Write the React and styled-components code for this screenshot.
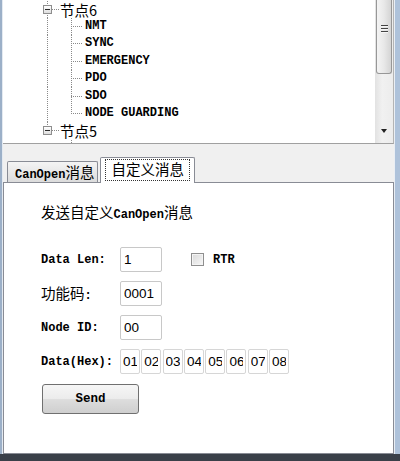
import React from 'react'
import styled, { createGlobalStyle } from 'styled-components'

const GlobalStyle = createGlobalStyle`
  html, body {
    margin: 0;
    padding: 0;
    background: #f0f0f0;
  }
  body {
    font-family: "Liberation Mono", "Noto Sans CJK SC", monospace;
    font-size: 12px;
    color: #000;
  }
`

const dotV = 'repeating-linear-gradient(to bottom, #8a8a8a 0 1px, transparent 1px 2px)'
const dotH = 'repeating-linear-gradient(to right, #8a8a8a 0 1px, transparent 1px 2px)'

// one dotted connector of the tree, as a background layer
const railLayer = (r) => {
  if (r.h) return `${dotH} ${r.x}px 50% / ${r.h}px 1px no-repeat`
  if (r.top) return `${dotV} ${r.x}px 0 / 1px 50% no-repeat`
  return `${dotV} ${r.x}px 0 / 1px 100% no-repeat`
}

const Window = styled.div`
  width: 400px;
  height: 461px;
  display: grid;
  grid-template-columns: 3px 1fr 6px;
  grid-template-rows: 1fr 7px;
  overflow: hidden;
`

const LeftFrame = styled.div`
  background: linear-gradient(to right, #9cb0c8 0 2px, #e4eaf1 2px);
`

const RightFrame = styled.div`
  background: linear-gradient(to right, #e9eef4 0 1px, #aec2da 1px);
`

const BottomBar = styled.div`
  grid-column: 1 / -1;
  background: #3a4049;
`

const Main = styled.div`
  display: flex;
  flex-direction: column;
  min-width: 0;
  background: #f0f0f0;
`

const Tree = styled.div`
  height: 143px;
  display: flex;
  background: #fff;
  border-bottom: 1px solid #a0a0a0;
  border-right: 1px solid #b4b4b4;
`

const TreeItems = styled.ul`
  flex: 1;
  margin: 0;
  padding: 0.5px 0 0;
  list-style: none;
  overflow: hidden;
`

const TreeRow = styled.li`
  height: 17.4px;
  line-height: 17px;
  display: flex;
  align-items: center;
  padding-left: ${(p) => p.$indent}px;
  font-weight: 700;
  white-space: nowrap;
  background: ${(p) => p.$rails.map(railLayer).join(', ')};
`

const Expander = styled.span`
  position: relative;
  width: 9px;
  height: 9px;
  box-sizing: border-box;
  margin-right: 8px;
  border: 1px solid #8e8e8e;
  background: linear-gradient(#ffffff, #dedede);
  &::after {
    content: '';
    position: absolute;
    left: 1px;
    right: 1px;
    top: 3px;
    height: 1px;
    background: #2a2a2a;
  }
`

const Cn = styled.span`
  font-family: "Noto Sans CJK SC", sans-serif;
  font-size: 14.5px;
  font-weight: 400;
  line-height: 17px;
`

const ScrollTrack = styled.div`
  width: 18px;
  display: flex;
  flex-direction: column;
  background: linear-gradient(to right, #e2e2e2, #f1f1f1 40%, #ececec);
`

const Thumb = styled.div`
  height: 74px;
  margin: 0 1px;
  box-sizing: border-box;
  padding-top: 25px;
  display: flex;
  justify-content: center;
  border: 1px solid #979797;
  border-top: none;
  border-radius: 0 0 3px 3px;
  background: linear-gradient(to right, #f4f4f4, #e8e8e8 50%, #d4d4d4);
`

const Grip = styled.span`
  width: 7px;
  height: 9px;
  background: repeating-linear-gradient(to bottom, #444 0 1px, #f6f6f6 1px 2px, transparent 2px 3px);
`

const ArrowBox = styled.div`
  margin-top: auto;
  height: 24px;
  display: flex;
  align-items: center;
  justify-content: center;
`

const ArrowDown = styled.span`
  width: 0;
  height: 0;
  border-left: 3.5px solid transparent;
  border-right: 3.5px solid transparent;
  border-top: 4px solid #222;
`

const TabStrip = styled.div`
  height: 25px;
  margin-top: 13px;
  padding-left: 4px;
  display: flex;
  align-items: flex-end;
  gap: 2px;
  position: relative;
  z-index: 1;
`

const Tab = styled.div`
  display: flex;
  align-items: center;
  box-sizing: border-box;
  height: ${(p) => (p.$active ? 26 : 21)}px;
  margin-bottom: ${(p) => (p.$active ? -1 : 0)}px;
  padding: ${(p) => (p.$active ? '1px 4px 2px 4px' : '2px 3px 0 7px')};
  border: 1px solid #898c95;
  border-bottom: none;
  border-radius: 2px 2px 0 0;
  background: ${(p) => (p.$active ? '#fff' : 'linear-gradient(#f4f4f4, #e8e8e8 50%, #dcdcdc)')};
  font-weight: 700;
  white-space: nowrap;
`

const TabLabel = styled.span`
  line-height: 17px;
`

const FocusRect = styled.span`
  align-self: stretch;
  display: flex;
  align-items: center;
  padding: 0 5px;
  border: 1px dotted #333;
`

const Panel = styled.div`
  flex: 1;
  background: #fff;
  border: 1px solid #898c95;
  padding: 20px 0 0 37px;
`

const Heading = styled.div`
  height: 17px;
  line-height: 17px;
  font-weight: 700;
  white-space: nowrap;
`

const Form = styled.div`
  margin-top: 27px;
  display: grid;
  grid-template-columns: 79px auto;
  row-gap: 9px;
  align-items: center;
  justify-content: start;
`

const Label = styled.span`
  font-weight: 700;
  white-space: nowrap;
`

const Field = styled.div`
  display: flex;
  align-items: center;
  gap: ${(p) => p.$gap || 0}px;
`

const TextBox = styled.input`
  width: ${(p) => p.$w}px;
  height: 25px;
  box-sizing: border-box;
  margin: 0;
  padding: 0 ${(p) => (p.$w < 30 ? 2 : 3)}px;
  border: 1px solid ${(p) => (p.$w < 30 ? '#d6d6d6' : '#c8c8c8')};
  border-radius: 2px;
  background: #fff;
  font-family: "Liberation Sans", sans-serif;
  font-size: 13.5px;
  color: #000;
  outline: none;
`

const CheckBox = styled.span`
  width: 13px;
  height: 13px;
  box-sizing: border-box;
  margin-left: 29px;
  border: 1px solid #8f8f8f;
  background: linear-gradient(135deg, #d9d9d9, #f7f7f7);
  box-shadow: inset 0 0 0 1px #f4f4f4;
`

const CheckLabel = styled.span`
  margin-left: 9px;
  font-weight: 700;
`

const SendButton = styled.button`
  margin: 10px 0 0 1px;
  width: 97px;
  height: 30px;
  border: 1px solid #707070;
  border-radius: 3px;
  background: linear-gradient(#f6f6f6, #ececec 48%, #dddddd 52%, #cfcfcf);
  font-family: "Liberation Mono", monospace;
  font-size: 12.5px;
  font-weight: 700;
  color: #000;
`

const treeRows = [
  { label: <Cn>节点6</Cn>, indent: 40, node: true, rails: [{ x: 44 }, { x: 49, h: 7 }] },
  { label: 'NMT', indent: 82, rails: [{ x: 44 }, { x: 68 }, { x: 68, h: 11 }] },
  { label: 'SYNC', indent: 82, rails: [{ x: 44 }, { x: 68 }, { x: 68, h: 11 }] },
  { label: 'EMERGENCY', indent: 82, rails: [{ x: 44 }, { x: 68 }, { x: 68, h: 11 }] },
  { label: 'PDO', indent: 82, rails: [{ x: 44 }, { x: 68 }, { x: 68, h: 11 }] },
  { label: 'SDO', indent: 82, rails: [{ x: 44 }, { x: 68 }, { x: 68, h: 11 }] },
  { label: 'NODE GUARDING', indent: 82, rails: [{ x: 44 }, { x: 68, top: true }, { x: 68, h: 11 }] },
  { label: <Cn>节点5</Cn>, indent: 40, node: true, rails: [{ x: 44, top: true }, { x: 49, h: 7 }] },
  { label: '', indent: 82, rails: [{ x: 68 }, { x: 68, h: 11 }] },
]

const hexBytes = ['01', '02', '03', '04', '05', '06', '07', '08']

export default function App() {
  return (
    <>
      <GlobalStyle />
      <Window>
        <LeftFrame />
        <Main>
          <Tree>
            <TreeItems>
              {treeRows.map((r, i) => (
                <TreeRow key={i} $indent={r.indent} $rails={r.rails}>
                  {r.node && <Expander />}
                  {r.label}
                </TreeRow>
              ))}
            </TreeItems>
            <ScrollTrack>
              <Thumb>
                <Grip />
              </Thumb>
              <ArrowBox>
                <ArrowDown />
              </ArrowBox>
            </ScrollTrack>
          </Tree>

          <TabStrip>
            <Tab>
              <TabLabel>
                CanOpen<Cn>消息</Cn>
              </TabLabel>
            </Tab>
            <Tab $active>
              <FocusRect>
                <TabLabel>
                  <Cn>自定义消息</Cn>
                </TabLabel>
              </FocusRect>
            </Tab>
          </TabStrip>

          <Panel>
            <Heading>
              <Cn>发送自定义</Cn>CanOpen<Cn>消息</Cn>
            </Heading>
            <Form>
              <Label>Data Len:</Label>
              <Field>
                <TextBox $w={42} value="1" readOnly />
                <CheckBox />
                <CheckLabel>RTR</CheckLabel>
              </Field>

              <Label>
                <Cn>功能码</Cn>:
              </Label>
              <Field>
                <TextBox $w={42} value="0001" readOnly />
              </Field>

              <Label>Node ID:</Label>
              <Field>
                <TextBox $w={42} value="00" readOnly />
              </Field>

              <Label>Data(Hex):</Label>
              <Field $gap={1.3}>
                {hexBytes.map((b) => (
                  <TextBox key={b} $w={20} value={b} readOnly />
                ))}
              </Field>
            </Form>
            <SendButton>Send</SendButton>
          </Panel>
        </Main>
        <RightFrame />
        <BottomBar />
      </Window>
    </>
  )
}
